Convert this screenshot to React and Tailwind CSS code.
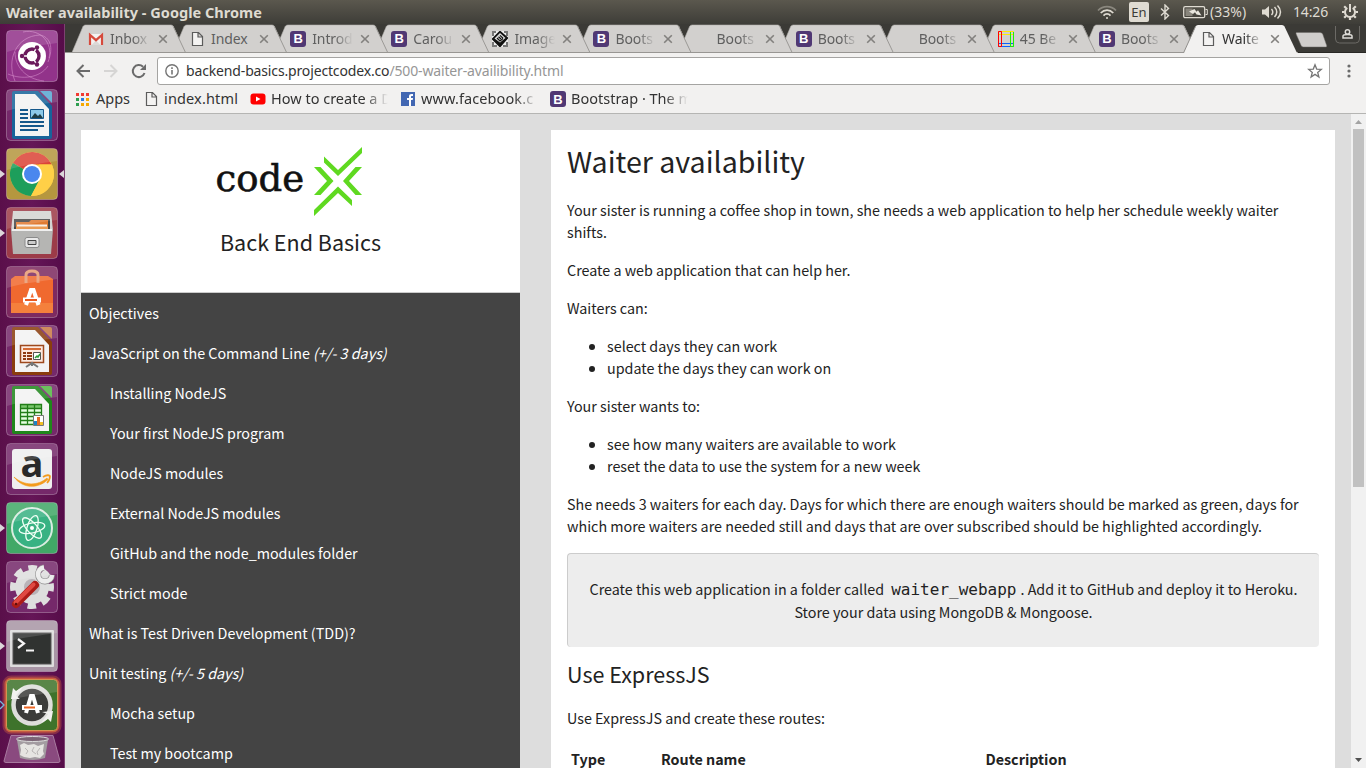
import React from "react";

const UI = "font-['Noto_Sans','Open_Sans',sans-serif]";

const tabs = [
  { icon: "gmail", label: "Inbox" },
  { icon: "page", label: "Index" },
  { icon: "boot", label: "Introd" },
  { icon: "boot", label: "Carou" },
  { icon: "image", label: "Image" },
  { icon: "boot", label: "Boots" },
  { icon: "none", label: "Boots" },
  { icon: "boot", label: "Boots" },
  { icon: "none", label: "Boots" },
  { icon: "best", label: "45 Be" },
  { icon: "boot", label: "Boots" },
  { icon: "page", label: "Waite" },
];

const nav = [
  { text: "Objectives" },
  { text: "JavaScript on the Command Line ", days: "(+/- 3 days)" },
  { text: "Installing NodeJS", sub: true },
  { text: "Your first NodeJS program", sub: true },
  { text: "NodeJS modules", sub: true },
  { text: "External NodeJS modules", sub: true },
  { text: "GitHub and the node_modules folder", sub: true },
  { text: "Strict mode", sub: true },
  { text: "What is Test Driven Development (TDD)?" },
  { text: "Unit testing ", days: "(+/- 5 days)" },
  { text: "Mocha setup", sub: true },
  { text: "Test my bootcamp", sub: true },
];

function Favicon({ kind }) {
  if (kind === "boot")
    return (
      <span className="flex h-4 w-4 shrink-0 items-center justify-center rounded-[3px] bg-[#503874] font-['Liberation_Sans',sans-serif] text-[13px] leading-none font-bold text-white">
        B
      </span>
    );
  return (
    <svg className="h-4 w-4 shrink-0" viewBox="0 0 16 16">
      {kind === "gmail" && (
        <g>
          <path d="M1 3h14v11H1z" fill="#f3f1f0" />
          <path d="M3.5 14 8 9.5l4.500 4.500z" fill="#dcd9d7" />
          <path d="M2 14V4l6 5.200L14 4v10" fill="none" stroke="#d64a3c" strokeWidth="2.200" />
        </g>
      )}
      {kind === "page" && (
        <path d="M3.500 1.500h6l4 4v9h-10zM9 1.500V6h4.500" fill="#f4f3f2" stroke="#5c5c5c" strokeWidth="1.200" />
      )}
      {kind === "image" && (
        <g>
          <path d="M0 0h16v16H0z" fill="#eee" />
          <path d="M0 0h4v2H2v3H0zM12 0h4v5h-2V2h-2zM0 11h2v3h3v2H0zM14 11h2v5h-5v-2h3z" fill="#777" />
          <path d="M8 .5 15.500 7 8 15.500.5 8z" fill="#111" stroke="#111" strokeWidth="1.500" />
          <path d="M8 2 13.500 7 8 11.500 2.500 7.500z" fill="#ddd" />
          <path d="m5 7 3 3 3-2.500M6.500 5.700 9 8M8 4.400l3 2.800" fill="none" stroke="#111" strokeWidth="1.200" />
        </g>
      )}
      {kind === "best" && (
        <g fill="none" strokeWidth="1">
          <path d="M.5.500h15v3H.5z" stroke="#ffe800" />
          <path d="M.5 12.500h15v3H.5z" stroke="#0a62ff" />
          <path d="M.5.500h3v15h-3z" stroke="#f00" />
          <path d="M12.500 1v14.500h3V1" stroke="#1ff000" />
        </g>
      )}
      {kind === "youtube" && (
        <g>
          <rect x="0.500" y="2.500" width="15" height="11" rx="3" fill="#f00" />
          <path d="M6 5.500v5L10.500 8z" fill="#fff" />
        </g>
      )}
      {kind === "facebook" && (
        <g>
          <path d="M1 1h14v14H1z" fill="#4267b2" />
          <path d="M9 15V9H7V7h2V5.500C9 3.700 10 3 11.500 3H13v2h-1c-.8 0-1 .3-1 1v1h2l-.3 2H11v6z" fill="#fff" />
        </g>
      )}
      {kind === "apps" &&
        ["#f23c33", "#f23c33", "#f23c33", "#2f9e50", "#2a7de1", "#f6a800", "#2f9e50", "#f6a800", "#f6a800"].map((c, i) => (
          <rect key={i} x={1 + (i % 3) * 5} y={2 + Math.floor(i / 3) * 5} width="3" height="3" fill={c} />
        ))}
    </svg>
  );
}

function TopBar() {
  return (
    <header className={`flex h-6 shrink-0 items-center bg-linear-to-b from-[#5b584e] to-[#3e3d38] pl-[6px] pr-[7px] text-[#dfdbd2] ${UI}`}>
      <h1 className="flex-1 text-[14.500px] leading-6 font-bold tracking-[0.020px] whitespace-nowrap">Waiter availability - Google Chrome</h1>
      <svg className="h-[18px] w-[20px]" viewBox="0 0 20 18" fill="none" stroke="#dfdbd2" strokeWidth="1.700">
        <path d="M1 7.500c5-5.200 13-5.200 18 0" stroke="#8a877e" />
        <path d="M3.700 10c3.700-3.900 9-3.900 12.600 0M6.500 12.600c2-2.200 5-2.200 7 0" />
        <circle cx="10" cy="15" r="1" fill="#dfdbd2" stroke="none" />
      </svg>
      <span className="ml-[12px] flex h-5 w-5 items-center justify-center rounded-[2px] bg-[#dfdbd2] text-[13px] leading-none text-[#3c3b37]">En</span>
      <svg className="ml-[9px] h-4 w-[14px]" viewBox="0 0 14 16" fill="none" stroke="#dfdbd2" strokeWidth="1.400">
        <path d="m3 4.500 7.500 7L7 15V1l3.500 3.500-7.500 7" />
      </svg>
      <svg className="ml-[11px] h-4 w-[25px]" viewBox="0 0 25 16">
        <rect x=".7" y="2.700" width="21" height="11" rx="1.500" fill="none" stroke="#dfdbd2" strokeWidth="1.300" />
        <path d="M22.500 5.500h1.800v5h-1.800" fill="none" stroke="#dfdbd2" />
        <path d="M2.500 4.500h7v7.500h-7z" fill="#88857c" />
        <path d="m6 7.500 5.500-2.500 2 2.700 1.500-1.500 3.500 5.300-5-1-1.500-2.200-2 1.600z" fill="#e9e6de" />
      </svg>
      <span className="ml-[2px] w-[41px] text-[14px] leading-6 tracking-[0.050px] whitespace-nowrap">(33%)</span>
      <svg className="ml-[10px] h-4 w-[22px]" viewBox="0 0 22 16">
        <path d="M1 5.500h3L8 2v12l-4-3.500H1z" fill="#dfdbd2" />
        <path d="M10.500 5c1.700 1.700 1.700 4.300 0 6M13.500 3c3 3 3 7 0 10M16.500 1.500c4 4 4 9 0 13" fill="none" stroke="#dfdbd2" strokeWidth="1.500" />
      </svg>
      <span className="ml-[10px] w-[39px] text-[14px] leading-6 tracking-[-0.150px] whitespace-nowrap">14:26</span>
      <svg className="ml-[9px] h-[18px] w-[18px]" viewBox="0 0 18 18" fill="none" stroke="#dfdbd2">
        <path d="M6.300 4.800a5 5 0 1 0 5.400 0" strokeWidth="2" />
        <path d="M9 1v8" strokeWidth="2" />
        <path d="M3.200 3.200 5 5M14.800 3.200 13 5M1 9h2.500M14.500 9H17M3.200 14.800 5 13M14.800 14.800 13 13M9 14.500V17" strokeWidth="2.200" />
      </svg>
    </header>
  );
}

function Tile({ bg, glow, running, active, children }) {
  return (
    <div className="relative h-[52px] w-[52px]">
      <svg className="block h-[52px] w-[52px] overflow-visible" viewBox="0 0 52 52">
        {glow && (
          <g fill="none" stroke="#f0763a">
            <rect x="-1" y="-1" width="54" height="54" rx="6" strokeWidth="5" opacity=".3" />
            <rect x="0" y="0" width="52" height="52" rx="5" strokeWidth="3" opacity=".6" />
          </g>
        )}
        <rect x=".5" y=".5" width="51" height="51" rx="4" fill={bg} stroke={glow ? "#e9a05a" : "#fff"} strokeOpacity={glow ? 0.8 : 0.28} />
        {children}
        <path d="M1 4a3 3 0 0 1 3-3h44a3 3 0 0 1 3 3v9C38 15 16 17 1 22z" fill="#fff" opacity=".14" />
      </svg>
      {running && <span className="absolute top-[22px] -left-[6px] h-0 w-0 border-y-4 border-l-[5px] border-y-transparent border-l-[#dcd6da]" />}
      {active && <span className="absolute top-[22px] -right-[6px] h-0 w-0 border-y-4 border-r-[5px] border-y-transparent border-r-[#dcd6da]" />}
    </div>
  );
}

function Doc({ color, light, children }) {
  return (
    <g>
      <path d="M8 2h24l14 15v31a2 2 0 0 1-2 2H8a2 2 0 0 1-2-2V4a2 2 0 0 1 2-2z" fill={color} />
      <path d="M9 5h20l14 15v27H9z" fill="#f3f3f3" />
      <path d="M34 2h10a2 2 0 0 1 2 2v10z" fill={light} />
      {children}
    </g>
  );
}

function Launcher() {
  return (
    <aside className="flex w-[65px] shrink-0 flex-col items-start gap-[7px] border-r border-[#7d4171] bg-linear-to-r from-[#5a0f4a] via-[#651657] to-[#560c49] pt-[6px] pl-[6px]">
      <Tile bg="#92338a">
        <path d="M9 51C0 30 10 6 34 5c10 2 14 12 8 27" fill="none" stroke="#d58aca" opacity=".6" />
        <path d="M2 44c14 6 32 4 40-8M17 2c18-4 30 12 26 26M9 22c0 14 10 27 29 29" fill="none" stroke="#df9bd5" opacity=".5" />
        <circle cx="26" cy="26" r="14" fill="#fff" />
        <circle cx="26" cy="26" r="7" fill="none" stroke="#6b1a5c" strokeWidth="3.400" />
        <path d="m26 26-12 0M26 26l6-11M26 26l6 11" stroke="#fff" strokeWidth="1.500" />
        <g fill="#6b1a5c">
          <circle cx="16" cy="26" r="2.200" />
          <circle cx="31" cy="17.500" r="2.200" />
          <circle cx="31" cy="34.500" r="2.200" />
        </g>
      </Tile>
      <Tile bg="#75296a">
        <Doc color="#17639a" light="#57a6d2">
          <path d="M14 21h8M14 25h8M14 29h8M14 33h24M14 37h24M14 41h18" stroke="#15588b" strokeWidth="2" />
          <path d="M24.500 20.500h13v9h-13z" fill="#8cc9e8" stroke="#15588b" />
          <path d="m25 29 4-5 3 3 2-2 3 4z" fill="#1e3d44" />
        </Doc>
      </Tile>
      <Tile bg="#b5973f" running active>
        <circle cx="26" cy="26" r="22" fill="#ffd047" />
        <path d="M26 26 6.900 15A22 22 0 0 1 45.800 16.400H26z" fill="#db4437" />
        <path d="M6.900 15A22 22 0 0 0 25 48l9-17.500-8-4.500z" fill="#1d9e5b" />
        <path d="M45.800 16.400A22 22 0 0 1 25 48l9.500-17L33 16.400z" fill="#ffd047" />
        <circle cx="26" cy="26" r="10" fill="#fff" />
        <circle cx="26" cy="26" r="8" fill="#4a87ee" />
      </Tile>
      <Tile bg="#9c3b48" running>
        <path d="M7 4h38l2 20H5z" fill="#d3d3d1" />
        <path d="M8 12h36v14H8z" fill="#474747" />
        <path d="M10 15h13l2-2h17v11H10z" fill="#e07a31" />
        <path d="M11 17.500h30v3H11z" fill="#f8efe6" />
        <path d="M10 19.500h32v6H10z" fill="#ea9b54" />
        <path d="M5 22h42l-2 25H7z" fill="#b5b5b3" />
        <path d="M6 23h40" stroke="#efefef" strokeWidth="2" />
        <rect x="19" y="30.500" width="14" height="10" rx="2" fill="#e9e9e9" stroke="#8a8a8a" />
        <path d="M22 33.500h8v4h-8z" fill="#ccc" stroke="#444" />
      </Tile>
      <Tile bg="#7d2a60">
        <path d="M5 13l4-3h33l5 3v34H5z" fill="#f0692f" />
        <path d="M5 37h42v10H5z" fill="#f4803c" />
        <path d="M20 17V9q0-4 6-4t6 4v8" fill="none" stroke="#e79a72" strokeWidth="3" />
        <path d="m20 39 5-15h2.500l5 15" fill="none" stroke="#fff" strokeWidth="4" />
        <path d="M17 31.500h18v5H17z" fill="#fff" />
        <path d="M19 34h12" stroke="#e95a22" strokeWidth="2" />
      </Tile>
      <Tile bg="#75296a">
        <Doc color="#8a3d0d" light="#c87944">
          <path d="M14.500 20.500h23v17h-23z" fill="#fde9df" stroke="#9e491d" strokeWidth="1.500" />
          <path d="M17 24h18" stroke="#d56b35" strokeWidth="2" />
          <path d="M17 28h3M17 31h3M17 34h3M21 28h5M21 31h5M21 34h5" stroke="#8f3a13" strokeWidth="2" />
          <path d="M27.500 27.500h7v7h-7z" fill="#fff" stroke="#555" />
          <path d="m29 33 2-2 1 1 2-3" stroke="#2a9a39" fill="none" strokeWidth="1.500" />
          <path d="m20 42 6-4 6 4M26 37v4" fill="none" stroke="#777" strokeWidth="2" />
        </Doc>
      </Tile>
      <Tile bg="#75296a">
        <Doc color="#1f861b" light="#53b643">
          <path d="M14.500 20.500h21v20h-21z" fill="#e5ffe0" />
          <path d="M14 20h22v5H14z" fill="#79c66c" />
          <path d="M14.500 20.500h21v20h-21zM14.500 24.500h21M14.500 28.500h21M14.500 32.500h21M14.500 36.500h21M21.500 20v21M28.500 20v21" fill="none" stroke="#217d17" strokeWidth="1.300" />
          <path d="M27.500 31.500h10v10h-10z" fill="#fff" stroke="#777" />
          <path d="M28 37h3v4h-3z" fill="#1c83c6" />
          <path d="M31 33h3v8h-3z" fill="#e46b23" />
          <path d="M34 38h3v3h-3z" fill="#f1bf22" />
        </Doc>
      </Tile>
      <Tile bg="#75296a">
        <rect x="6" y="6" width="40" height="40" rx="3" fill="#efefef" />
        <text x="26" y="33.500" textAnchor="middle" fontFamily="Open Sans" fontWeight="700" fontSize="38" fill="#292929">a</text>
        <path d="M8 34c10 9 24 9 33 1l1 1.500C32 46 17 46 8 34z" fill="#f39b1d" stroke="#f39b1d" strokeWidth=".6" />
        <path d="M37 34c3-2 6-2 7-1 0 2-1 5-3 7" fill="none" stroke="#f39b1d" strokeWidth="1.700" />
      </Tile>
      <Tile bg="#41a867" running>
        <circle cx="26" cy="26" r="20" fill="#38b283" stroke="#d9ede1" strokeWidth="2" />
        <g fill="none" stroke="#effff5" strokeWidth="1.300" transform="rotate(-12 26 26)">
          <ellipse cx="26" cy="26" rx="13" ry="5" />
          <ellipse cx="26" cy="26" rx="13" ry="5" transform="rotate(60 26 26)" />
          <ellipse cx="26" cy="26" rx="13" ry="5" transform="rotate(120 26 26)" />
        </g>
        <circle cx="26" cy="26" r="2" fill="#fff" />
      </Tile>
      <Tile bg="#75296a">
        <circle cx="26" cy="26" r="19" fill="none" stroke="#dedede" strokeWidth="6" strokeDasharray="8.500 6.423" strokeDashoffset="4.250" />
        <circle cx="26" cy="26" r="12.500" fill="#b9b3b8" stroke="#dedede" strokeWidth="9" />
        <path d="m26 26 9-9" stroke="#d9d9d9" strokeWidth="5" />
        <path d="M38 6.500A7 7 0 1 0 46 14" fill="none" stroke="#8d8d8d" strokeWidth="6" />
        <path d="M38 6.500A7 7 0 1 0 46 14" fill="none" stroke="#ececec" strokeWidth="4.600" />
        <path d="m10 43 19-19" stroke="#ad1c17" strokeWidth="8" strokeLinecap="round" />
        <path d="m9.500 41.500 18-18" stroke="#e04942" strokeWidth="4" strokeLinecap="round" />
        <circle cx="10" cy="43" r="1.300" fill="#5e0f0c" />
      </Tile>
      <Tile bg="#a895a5" running>
        <rect x="4" y="10" width="44" height="37" rx="1" fill="#ddd" />
        <rect x="7" y="13" width="38" height="31" fill="#303331" stroke="#555" />
        <path d="m12 19 6 4.500-6 4.500M20 30.500h8" fill="none" stroke="#f5f5f5" strokeWidth="2.200" />
      </Tile>
      <Tile bg="#3e732b" glow>
        <circle cx="26" cy="26" r="18.500" fill="#3c3c3a" stroke="#dededb" strokeWidth="4.500" />
        <path d="m5 20 2-11 3 3 7-4-7 9 4 3z" fill="#f1f1ee" />
        <path d="m47 32-2 11-3-3-7 4 7-9-6-2z" fill="#f1f1ee" />
        <path d="m20 34 5-17h2l5 17" fill="none" stroke="#fff" strokeWidth="4" />
        <path d="M16 26h20v5H16z" fill="#fff" />
        <path d="M18 28.500h11" stroke="#ed6522" strokeWidth="2" />
        <path d="m-6 22 4 4-4 4" fill="none" stroke="#73b6dc" strokeWidth="1.300" />
      </Tile>
      <svg className="-mt-[3px] -ml-[3px] block h-[28px] w-[58px] shrink-0" viewBox="0 0 58 28">
        <path d="M8 .5h42l7 25.500q0 1.500-2 1.500H3q-2 0-2-1.500z" fill="#8a4a7f" stroke="#a87a9f" />
        <path d="M14 5h31l-3 18q-12 4-25 0z" fill="#a39ca1" />
        <path d="m17 10 4-2 4 2 6-1 4 2 6-2-1 7 1 3-4 4-5-1-5 1-6-1-4-2 1-5z" fill="#e6e5e2" />
        <path d="m22 13 3 3-2 3m8-7-2 4 4 3m4-6-3 4 1 3" stroke="#b9b6b5" fill="none" />
        <ellipse cx="29.500" cy="4" rx="16" ry="2.500" fill="#7b6475" stroke="#ddd" />
      </svg>
    </aside>
  );
}

function TabStrip() {
  const inactive = tabs.slice(0, 11).map((_, i) => 7 + i * 101.1).reverse();
  return (
    <div className="relative h-[29px] w-full shrink-0 bg-[#3b3a36]">
      <svg className="absolute inset-0 h-[29px] w-full" viewBox="0 0 1301 29">
        {inactive.map((x) => (
          <g key={x} transform={`translate(${x} 0)`}>
            <path d="M0 28.500 11 2.500Q11.800 1 13.500 1H99Q100.700 1 101.500 2.500L113.500 28.500z" fill="#d2d0ce" />
            <path d="M101 2 113.500 28.500" stroke="#9b9996" fill="none" />
            <path d="M0 28.500 11 2.500Q11.800 1 13.500 1H99Q100.700 1 101.500 2.500" fill="none" stroke="#b5b3b0" strokeWidth=".6" />
          </g>
        ))}
        <path d="M0 28.500H1301" stroke="#989693" />
        <path d="M1118.500 29 1130.500 2.500Q1131.300 1 1133 1H1217Q1218.700 1 1219.500 2.500L1232 29z" fill="#f2f1f0" />
        <path d="M1118.500 29 1130.500 2.500" stroke="#908e8b" fill="none" />
        <path d="M1233 28.500H1301" stroke="#292825" />
        <path d="M1231.500 8.500h23.500q2 0 2.700 1.500l4 11.500q.5 1.500-1 1.500h-22q-2 0-2.600-1.500l-5-11.500q-.5-1.500.4-1.500z" fill="#cfcdcb" stroke="#6b6965" strokeWidth=".5" />
        <path d="M1270.500 2v13q0 4 4 4h16q4 0 4-4V2" fill="#3b3a36" stroke="#6c6a66" />
        <path d="M1278 14v-2q0-1.500 4.500-1.500t4.500 1.500v2z" fill="none" stroke="#dedcd8" strokeWidth="1.500" />
        <circle cx="1282.500" cy="8" r="2.200" fill="none" stroke="#dedcd8" strokeWidth="1.500" />
      </svg>
      <div className={`relative flex h-[29px] pl-[7px] ${UI}`}>
        {tabs.map((t, i) => (
          <div key={i} className="flex w-[101.1px] shrink-0 items-center pl-4">
            <Favicon kind={t.icon} />
            <span className={`ml-[6px] w-[41px] overflow-hidden text-[14px] leading-[28px] tracking-[-0.1px] whitespace-nowrap ${t.label === "Index" ? "" : "mask-r-from-55%"} ${i === 11 ? "text-[#333]" : "text-[#5f5f5f]"}`}>{t.label}</span>
            <svg className="ml-[7px] h-[10px] w-[10px] shrink-0" viewBox="0 0 10 10">
              <path d="m1.200 1.200 7.600 7.600m0-7.600-7.600 7.600" stroke="#82807e" strokeWidth="1.600" />
            </svg>
          </div>
        ))}
      </div>
    </div>
  );
}

function Toolbar() {
  return (
    <div className={`flex h-[61px] shrink-0 flex-col border-b border-[#b5b5b3] bg-[#f2f1f0] ${UI}`}>
      <div className="flex h-[33px] items-center pt-[3px] pl-[10px]">
        <svg className="h-4 w-4" viewBox="0 0 16 16" fill="none" stroke="#6b6b6b" strokeWidth="2"><path d="M15 8H2.500M8.500 2 2.500 8l6 6" /></svg>
        <svg className="ml-3 h-4 w-4" viewBox="0 0 16 16" fill="none" stroke="#d6d5d4" strokeWidth="2"><path d="M1 8h12.500M7.500 2l6 6-6 6" /></svg>
        <svg className="ml-3 h-4 w-4" viewBox="0 0 16 16"><path d="M13.500 10A6 6 0 1 1 12 3.800" fill="none" stroke="#6b6b6b" strokeWidth="2" /><path d="M15 1v6H9z" fill="#6b6b6b" /></svg>
        <div className="ml-[10px] flex h-[28px] w-[1173px] shrink-0 items-center rounded-[3px] border border-[#a5a4a2] bg-white pr-[6px] pl-[7px]">
          <svg className="h-[14px] w-[14px]" viewBox="0 0 14 14"><circle cx="7" cy="7" r="6.200" fill="none" stroke="#757575" strokeWidth="1.400" /><path d="M7 6v4.500M7 3.300v1.600" stroke="#757575" strokeWidth="1.600" /></svg>
          <span className="ml-[7px] flex-1 text-[14px] leading-[26px] tracking-[-0.150px] whitespace-nowrap text-[#333]">
            backend-basics.projectcodex.co<span className="text-[#969696]">/500-waiter-availibility.html</span>
          </span>
          <svg className="h-[16px] w-[16px]" viewBox="0 0 16 16"><path d="m8 1.800 1.700 4.300 4.600.3-3.600 3 1.200 4.600L8 11.400 4.100 14l1.200-4.600-3.600-3 4.600-.3z" fill="none" stroke="#757575" strokeWidth="1.300" /></svg>
        </div>
        <svg className="ml-[16px] h-4 w-[6px]" viewBox="0 0 6 16" fill="#6b6b6b"><circle cx="3" cy="3" r="1.600" /><circle cx="3" cy="8" r="1.600" /><circle cx="3" cy="13" r="1.600" /></svg>
      </div>
      <div className="flex h-[26px] items-center pl-[10px] text-[14.500px] leading-[22px] whitespace-nowrap text-[#333]">
        <Favicon kind="apps" /><span className="ml-[5px] w-[47px] pb-[2px]">Apps</span>
        <Favicon kind="page" /><span className="ml-[5px] w-[86px] pb-[2px] tracking-[0.150px]">index.html</span>
        <Favicon kind="youtube" /><span className="ml-[5px] w-[117px] overflow-hidden mask-r-from-80% pb-[2px]">How to create a D</span>
        <span className="w-[12px]" />
        <Favicon kind="facebook" /><span className="ml-[5px] w-[117px] overflow-hidden mask-r-from-80% pb-[2px] tracking-[0.100px]">www.facebook.c</span>
        <span className="w-[12px]" />
        <Favicon kind="boot" /><span className="ml-[5px] w-[117px] overflow-hidden mask-r-from-80% pb-[2px]">Bootstrap · The m</span>
      </div>
    </div>
  );
}

function Sidebar() {
  return (
    <div className="flex w-[439px] shrink-0 flex-col">
      <div className="flex h-[163px] shrink-0 flex-col items-center border-b border-[#ccc] bg-white pt-[16px]">
        <div className="flex h-[71px] w-[170px] items-start">
          <span className="w-[97px] pt-[11px] font-['DejaVu_Serif',serif] text-[37px] leading-[44px] text-[#111] [-webkit-text-stroke:0.6px_#111]">code</span>
          <svg className="mt-[1px] h-[70px] w-[50px] shrink-0" viewBox="0 0 50 70" fill="#5fd920">
            <path d="M11 9.500 25 23 49 0v6L25 29 11 15.500z" />
            <path d="M1 20h6.500l13 14-13 14H1l13-14z" />
            <path d="M49 20h-6.500L30 34l12.500 14H49L36 34z" />
            <path d="M25 39.500 39 53v6L25 46 1 69v-6z" />
          </svg>
        </div>
        <h2 className="mt-[10px] text-[21.500px] leading-[30px] whitespace-nowrap">Back End Basics</h2>
      </div>
      <nav className="flex-1 bg-[#444] px-2 text-[14.320px] text-white">
        {nav.map((n) => (
          <a key={n.text} className={`flex h-10 items-center whitespace-pre ${n.sub ? "pl-[21px]" : ""}`}>
            {n.text}
            {n.days && <i>{n.days}</i>}
          </a>
        ))}
      </nav>
    </div>
  );
}

function Article() {
  return (
    <main className="h-full w-[784px] shrink-0 overflow-hidden bg-white px-4 pt-[15px] text-[14.320px] leading-[22px]">
      <h1 className="mb-[22px] text-[28.600px] leading-[32px]">Waiter availability</h1>
      <p className="mb-4 whitespace-nowrap">Your sister is running a coffee shop in town, she needs a web application to help her schedule weekly waiter<br />shifts.</p>
      <p className="mb-4">Create a web application that can help her.</p>
      <p className="mb-4">Waiters can:</p>
      <ul className="mb-4 list-disc pl-10"><li>select days they can work</li><li>update the days they can work on</li></ul>
      <p className="mb-4">Your sister wants to:</p>
      <ul className="mb-4 list-disc pl-10"><li>see how many waiters are available to work</li><li>reset the data to use the system for a new week</li></ul>
      <p className="mb-4 whitespace-nowrap">She needs 3 waiters for each day. Days for which there are enough waiters should be marked as green, days for<br />which more waiters are needed still and days that are over subscribed should be highlighted accordingly.</p>
      <div className="mb-[11px] flex h-[94px] w-[752px] flex-col items-center rounded-[4px] border-t border-l border-[#ccc] bg-[#ededed] pt-[23px] leading-[23px] whitespace-nowrap">
        <p>Create this web application in a folder called <code className="px-1 font-['DejaVu_Sans_Mono',monospace] text-[16px] leading-[20px]">waiter_webapp</code>. Add it to GitHub and deploy it to Heroku.</p>
        <p>Store your data using MongoDB &amp; Mongoose.</p>
      </div>
      <h2 className="mb-[17px] text-[21.500px] leading-[32px]">Use ExpressJS</h2>
      <p>Use ExpressJS and create these routes:</p>
      <div className="mt-[19px] grid grid-cols-[90px_324.500px_1fr] pl-1 font-bold"><span>Type</span><span>Route name</span><span>Description</span></div>
    </main>
  );
}

export default function App() {
  return (
    <div className="flex h-[768px] w-[1366px] flex-col overflow-hidden">
      <TopBar />
      <div className="flex min-h-0 flex-1">
        <Launcher />
        <div className="flex min-w-0 flex-1 flex-col">
          <TabStrip />
          <Toolbar />
          <div className="flex min-h-0 flex-1 bg-[#ddd] font-['Noto_Sans_CJK_JP',sans-serif] text-[#222]">
            <div className="flex min-h-0 flex-1 gap-[31px] overflow-hidden pt-4 pl-4">
              <Sidebar />
              <Article />
            </div>
            <div className="flex w-[15px] shrink-0 flex-col items-center bg-[#f1f1f1]">
              <svg className="h-[15px] w-[15px]" viewBox="0 0 15 15"><path d="M4 10h7L7.500 6z" fill="#a3a3a3" /></svg>
              <div className="h-[358px] w-[11px] bg-[#c1c1c1]" />
              <div className="flex-1" />
              <svg className="h-[15px] w-[15px]" viewBox="0 0 15 15"><path d="M4 5h7L7.500 9z" fill="#505050" /></svg>
            </div>
          </div>
        </div>
      </div>
    </div>
  );
}
